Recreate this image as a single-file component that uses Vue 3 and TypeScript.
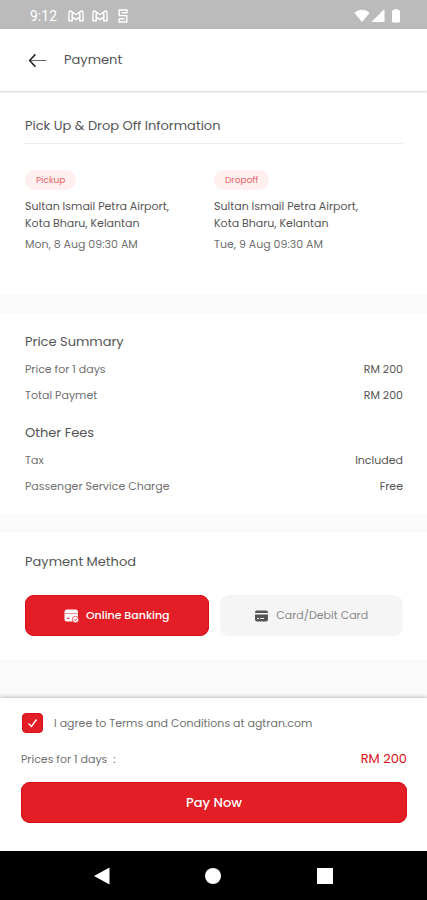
<script setup lang="ts">
import { ref } from 'vue'

interface Stop {
  label: string
  place: string[]
  time: string
}

interface Fee {
  name: string
  value: string
}

type Method = 'bank' | 'card'

const stops: Stop[] = [
  { label: 'Pickup', place: ['Sultan Ismail Petra Airport,', 'Kota Bharu, Kelantan'], time: 'Mon, 8 Aug 09:30 AM' },
  { label: 'Dropoff', place: ['Sultan Ismail Petra Airport,', 'Kota Bharu, Kelantan'], time: 'Tue, 9 Aug 09:30 AM' },
]

const groups: { title: string; rows: Fee[] }[] = [
  {
    title: 'Price Summary',
    rows: [
      { name: 'Price for 1 days', value: 'RM 200' },
      { name: 'Total Paymet', value: 'RM 200' },
    ],
  },
  {
    title: 'Other Fees',
    rows: [
      { name: 'Tax', value: 'Included' },
      { name: 'Passenger Service Charge', value: 'Free' },
    ],
  },
]

const method = ref<Method>('bank')
const agreed = ref(true)
</script>

<template>
  <div class="screen">
    <div class="status">
      <span class="clock">9:12</span>
      <svg v-for="n in 2" :key="n" class="mail" viewBox="0 0 16 12" aria-hidden="true">
        <path d="M1 10.800V2.600C1 .8 2.600.6 3.700 1.500L8 4.700l4.300-3.200C13.400.6 15 .8 15 2.600v8.200h-3.200V7L8 9.600 4.200 7v3.800zM4.200 2v5M11.800 2v5" />
      </svg>
      <svg class="app" viewBox="0 0 10 14" aria-hidden="true">
        <path d="M9 4.300V1H1.200v5.600H8.800V13H1V9.800M3.500 3.800H9M1 9.800h5.500" />
      </svg>
      <svg class="signals" viewBox="0 0 48 16" aria-hidden="true">
        <path d="M.5 5C4.500.6 11.500.6 15.500 5L8 14z" />
        <path d="M30.500 1v13h-13z" />
        <path d="M39 2h1.500V1h3v1H45q1 0 1 1v10.500q0 1-1 1h-6q-1 0-1-1V3q0-1 1-1z" />
      </svg>
    </div>

    <header class="bar">
      <button class="back" type="button" aria-label="Back">
        <svg viewBox="0 0 18 14" aria-hidden="true">
          <path class="shaft" d="M2 7h15.500" />
          <path class="head" d="M7 1.200L1.500 7 7 12.800" />
        </svg>
      </button>
      <h1>Payment</h1>
    </header>

    <main class="content">
      <section class="panel trip">
        <h2 class="ruled">Pick Up &amp; Drop Off Information</h2>
        <div class="columns">
          <div v-for="stop in stops" :key="stop.label">
            <span class="tag">{{ stop.label }}</span>
            <p class="place">
              <span v-for="line in stop.place" :key="line">{{ line }}</span>
            </p>
            <p class="time">{{ stop.time }}</p>
          </div>
        </div>
      </section>

      <section class="panel prices">
        <div v-for="group in groups" :key="group.title">
          <h2>{{ group.title }}</h2>
          <dl>
            <div v-for="row in group.rows" :key="row.name" class="row">
              <dt>{{ row.name }}</dt>
              <dd>{{ row.value }}</dd>
            </div>
          </dl>
        </div>
      </section>

      <section class="panel methods">
        <h2>Payment Method</h2>
        <div class="choices">
          <button type="button" class="choice" :class="{ active: method === 'bank' }" :aria-pressed="method === 'bank'" @click="method = 'bank'">
            <svg viewBox="0 0 15 14" aria-hidden="true">
              <path class="fill" d="M3 .5h8.500Q14 .5 14 3v7H.5V3Q.5.5 3 .5zM.5 9H10v3.500H3Q.5 12.500.5 10z" />
              <path class="seam" d="M.5 4.500H14" />
              <circle class="fill badge" cx="11.500" cy="10.500" r="3.200" />
              <path class="cut" d="M2.800 9.300h3M10.200 10.500l1 1 1.800-1.900" />
            </svg>
            Online Banking
          </button>
          <button type="button" class="choice" :class="{ active: method === 'card' }" :aria-pressed="method === 'card'" @click="method = 'card'">
            <svg viewBox="0 0 15 14" aria-hidden="true">
              <path class="fill" d="M3 1.500h9q2 0 2 2V4H1v-.5q0-2 2-2zM1 5.500h13v5q0 2-2 2H3q-2 0-2-2z" />
              <path class="cut" d="M3 9.500h2M6 9.500H10" />
            </svg>
            Card/Debit Card
          </button>
        </div>
      </section>
    </main>

    <footer class="checkout">
      <label class="agree">
        <span class="box">
          <input v-model="agreed" type="checkbox" />
          <svg v-if="agreed" viewBox="0 0 20 20" aria-hidden="true">
            <path d="M6 10.500l3 3L14 6.500" />
          </svg>
        </span>
        I agree to Terms and Conditions at agtran.com
      </label>
      <div class="total">
        <span>Prices for 1 days &nbsp;:</span>
        <strong>RM 200</strong>
      </div>
      <button type="button" class="pay">Pay Now</button>
    </footer>

    <nav class="system" aria-label="System">
      <button type="button" aria-label="Back">
        <svg viewBox="0 0 18 18"><path d="M16.500 .5v17L1 9z" /></svg>
      </button>
      <button type="button" aria-label="Home">
        <svg viewBox="0 0 18 18"><circle cx="9" cy="9" r="8" /></svg>
      </button>
      <button type="button" aria-label="Recents">
        <svg viewBox="0 0 18 18"><path d="M1 1h16v16H1z" /></svg>
      </button>
    </nav>
  </div>
</template>

<style>
body {
  margin: 0;
}
</style>

<style scoped>
.screen {
  min-height: 100vh;
  display: flex;
  flex-direction: column;
  background: #fafafa;
  color: #707070;
  font-family: Poppins, Inter, "Liberation Sans", sans-serif;
  font-size: 11px;
  line-height: 17px;
  font-weight: 400;
}

h1,
h2,
p,
dl,
dd {
  margin: 0;
}

h1,
h2 {
  color: #555;
  font-size: 13px;
  line-height: 20px;
  font-weight: 400;
}

button {
  border: 0;
  padding: 0;
  background: none;
  color: inherit;
  font: inherit;
  cursor: pointer;
}

svg {
  display: block;
}

.status {
  box-sizing: border-box;
  height: 29px;
  padding: 3px 25px 0 30px;
  display: flex;
  align-items: center;
  gap: 8px;
  background: #bbb;
  color: #fff;
}

.clock {
  margin-right: 3px;
  font-family: Roboto, sans-serif;
  font-size: 14px;
}

.mail,
.app {
  fill: none;
  stroke: #fff;
  stroke-width: 1.4;
}

.mail {
  width: 16px;
  height: 12px;
}

.app {
  width: 10px;
  height: 14px;
  margin-left: 2px;
}

.signals {
  width: 48px;
  height: 16px;
  margin-left: auto;
  fill: #fff;
}

.bar {
  position: relative;
  height: 62px;
  padding: 0 28px;
  display: flex;
  align-items: center;
  gap: 17px;
  background: #fff;
  box-shadow: 0 1px 2px #0000002e;
}

.back svg {
  width: 19px;
  height: 15px;
  fill: none;
  stroke: #222;
}

.back .shaft {
  stroke: #666;
}

.back .head {
  stroke-width: 1.4;
}

.content {
  flex: 1;
  display: flex;
  flex-direction: column;
  gap: 18px;
}

.panel {
  padding: 0 24px 0 25px;
  background: #fff;
}

.trip {
  padding-top: 25px;
  padding-bottom: 42px;
}

.ruled {
  padding-bottom: 7px;
  border-bottom: 1px solid #ececec;
}

.columns {
  margin-top: 26px;
  display: grid;
  grid-template-columns: 1fr 1fr;
}

.tag {
  display: inline-block;
  padding: 0 11px;
  border-radius: 10px;
  background: #fff0ef;
  color: #e8666a;
  font-size: 9px;
  line-height: 20px;
}

.place {
  margin-top: 8px;
  color: #555;
}

.place span {
  display: block;
}

.time {
  margin-top: 4px;
}

.prices {
  padding-top: 19px;
  padding-bottom: 19px;
  display: flex;
  flex-direction: column;
  gap: 19px;
}

.prices dl {
  margin-top: 9px;
  display: flex;
  flex-direction: column;
  gap: 9px;
}

.row {
  display: flex;
  justify-content: space-between;
}

.row dd {
  color: #555;
}

.methods {
  padding-top: 20px;
  padding-bottom: 24px;
}

.choices {
  margin-top: 23px;
  display: grid;
  grid-template-columns: 1fr 1fr;
  gap: 11px;
}

.choice {
  height: 41px;
  border-radius: 9px;
  display: flex;
  align-items: center;
  justify-content: center;
  gap: 7px;
  background: #f5f5f5;
  color: #888;
  --icon: #555;
  --cut: #f5f5f5;
}

.choice.active {
  background: #e31e26;
  box-shadow: inset 0 0 0 1px #d80f17;
  color: #fff;
  font-weight: 500;
  --icon: #fff;
  --cut: #e31e26;
}

.choice svg {
  width: 15px;
  height: 14px;
}

.fill {
  fill: var(--icon);
}

.cut,
.seam,
.badge {
  stroke: var(--cut);
}

.cut {
  fill: none;
}

.seam {
  stroke-opacity: 0.5;
}

.badge {
  stroke-width: 0.7;
}

.checkout {
  position: relative;
  padding: 15px 20px 28px 21px;
  background: #fff;
  box-shadow: 0 -1px 4px #00000040;
}

.agree {
  display: flex;
  align-items: center;
  gap: 11px;
}

.box {
  display: grid;
  margin-left: 1px;
}

.box > * {
  grid-area: 1 / 1;
  width: 21px;
  height: 20px;
}

.box input {
  appearance: none;
  margin: 0;
  border: 1px solid #d80f17;
  border-radius: 4px;
}

.box input:checked {
  background: #e31e26;
}

.box svg {
  pointer-events: none;
  fill: none;
  stroke: #fff;
  stroke-width: 1.4;
}

.total {
  margin-top: 16px;
  display: flex;
  align-items: center;
  justify-content: space-between;
  line-height: 20px;
}

.total strong {
  color: #d80f17;
  font-size: 13px;
  font-weight: 400;
}

.pay {
  width: 100%;
  height: 41px;
  margin-top: 13px;
  border-radius: 9px;
  background: #e31e26;
  box-shadow: inset 0 0 0 1px #d80f17;
  color: #fff;
  font-size: 13px;
  font-weight: 500;
}

.system {
  height: 49px;
  padding: 0 46px;
  display: grid;
  grid-template-columns: repeat(3, 1fr);
  align-items: center;
  background: #000;
}

.system svg {
  width: 18px;
  height: 18px;
  margin: auto;
  fill: #fff;
}
</style>
